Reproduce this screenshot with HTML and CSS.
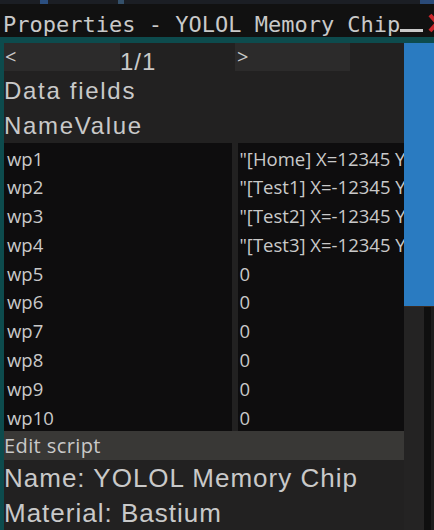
FILE: index.html
```html
<!DOCTYPE html>
<html>
<head>
<meta charset="utf-8">
<link rel="stylesheet" href="styles.css">
</head>
<body>
<div class="top"></div>
<div class="titlebar">
  <span class="title">Properties - YOLOL Memory Chip</span>
  <span class="min"></span>
  <svg class="close" width="18" height="20" viewBox="0 0 18 20"><path d="M2 2 L16 18 M16 2 L2 18" stroke="#c9262b" stroke-width="4" fill="none"/></svg>
</div>
<div class="frame">
  <div class="main">
    <div class="pager">
      <div class="pbtn">&lt;</div>
      <div class="plabel">1/1</div>
      <div class="pbtn">&gt;</div>
    </div>
    <div class="heading">Data fields</div>
    <div class="heading">NameValue</div>
    <div class="table">
      <div class="cell">wp1</div><div class="cell val">"[Home] X=12345 Y=12345 Z=12345"</div>
      <div class="cell">wp2</div><div class="cell val">"[Test1] X=-12345 Y=12345 Z=12345"</div>
      <div class="cell">wp3</div><div class="cell val">"[Test2] X=-12345 Y=12345 Z=12345"</div>
      <div class="cell">wp4</div><div class="cell val">"[Test3] X=-12345 Y=12345 Z=12345"</div>
      <div class="cell">wp5</div><div class="cell val">0</div>
      <div class="cell">wp6</div><div class="cell val">0</div>
      <div class="cell">wp7</div><div class="cell val">0</div>
      <div class="cell">wp8</div><div class="cell val">0</div>
      <div class="cell">wp9</div><div class="cell val">0</div>
      <div class="cell">wp10</div><div class="cell val">0</div>
    </div>
    <div class="edit">Edit script</div>
    <div class="info first">Name: YOLOL Memory Chip</div>
    <div class="info second">Material: Bastium</div>
  </div>
  <div class="side">
    <div class="thumb"></div>
    <div class="track"><div class="t1"></div><div class="t2"></div><div class="t3"></div></div>
  </div>
</div>
</body>
</html>
```
FILE: styles.css
```css
* { box-sizing: border-box; }
html, body { margin: 0; padding: 0; }
body {
  width: 434px;
  height: 530px;
  overflow: hidden;
  background: #0d4b4d;
  color: #c9c9c9;
}
.top {
  height: 4px;
  background: linear-gradient(90deg, #1b1e24 0, #1b1e24 40px, #2b4f80 40px, #2b4f80 48px, #1b1e24 48px, #1b1e24 118px, #34506a 118px, #34506a 124px, #1b1e24 124px, #1b1e24 420px, #2a4a78 420px);
}
.titlebar {
  height: 33px;
  background: #111111;
  display: flex;
  align-items: flex-start;
  padding: 9px 0 0 3px;
  overflow: hidden;
  white-space: nowrap;
}
.title {
  flex: none;
  font-family: "DejaVu Sans Mono", monospace;
  font-size: 22px;
  line-height: 24px;
  color: #c9c9c9;
}
.min {
  flex: none;
  width: 23px;
  height: 3px;
  margin-top: 16px;
  background: #c9c9c9;
}
.close {
  flex: none;
  margin-left: 5px;
  margin-top: 0;
}
.frame {
  display: flex;
  padding: 6px 0 0 4px;
  height: 493px;
}
.main {
  width: 400px;
  background: #222121;
  display: flex;
  flex-direction: column;
}
.pager {
  height: 28px;
  display: grid;
  grid-template-columns: 116px 115px 115px;
}
.pbtn {
  background: #2c2b2b;
  font-family: "Open Sans", sans-serif;
  font-size: 20px;
  line-height: 28px;
  padding-left: 1px;
}
.pbtn + .plabel + .pbtn { padding-left: 2px; }
.plabel {
  font-family: "Liberation Sans", sans-serif;
  font-size: 24px;
  line-height: 38px;
  height: 28px;
  letter-spacing: 1px;
}
.heading {
  font-family: "Liberation Sans", sans-serif;
  font-size: 24px;
  line-height: 30px;
  padding-top: 5px;
  letter-spacing: 1.7px;
}
.table {
  margin-top: 2px;
  display: grid;
  grid-template-columns: 228px 166px;
  column-gap: 6px;
}
.cell {
  background: #0e0d0e;
  height: 28.8px;
  padding: 1.5px 0 0 3px;
  font-family: "Open Sans", sans-serif;
  font-size: 18.5px;
  line-height: 27.3px;
  white-space: nowrap;
  overflow: hidden;
}
.cell.val { padding-left: 1.5px; }
.edit {
  height: 29px;
  background: #393836;
  font-family: "Open Sans", sans-serif;
  font-size: 20px;
  line-height: 29px;
  letter-spacing: 0.4px;
  padding-left: 0;
}
.info {
  font-family: "Liberation Sans", sans-serif;
  font-size: 26px;
  line-height: 32px;
  letter-spacing: 1px;
  white-space: nowrap;
}
.info.first { margin-top: 2px; }
.info.second { margin-top: 3px; }
.side {
  width: 30px;
  display: flex;
  flex-direction: column;
}
.thumb {
  height: 263px;
  background: #2a7bc1;
}
.track {
  flex: 1;
  display: flex;
  border-top: 1px solid #3a2a20;
}
.t1 { width: 20px; background: #242323; }
.t2 { width: 7px; background: #0f0f0f; }
.t3 { width: 3px; background: #1d1d1d; }
```
